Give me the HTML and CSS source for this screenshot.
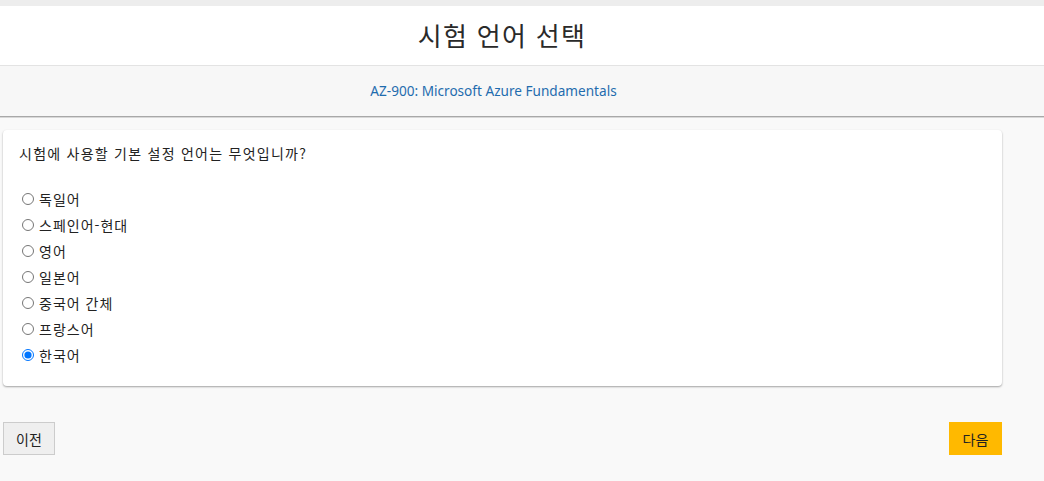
FILE: index.html
```html
<!DOCTYPE html>
<html lang="ko">
<head>
<meta charset="utf-8">
<title>시험 언어 선택</title>
<link rel="stylesheet" href="styles.css">
</head>
<body>
<div class="topstrip"></div>
<header class="title-bar">
  <h1>시험 언어 선택</h1>
</header>
<div class="sub-bar">
  <a class="exam-link" href="#">AZ-900: Microsoft Azure Fundamentals</a>
</div>
<main class="content">
  <section class="card">
    <p class="question">시험에 사용할 기본 설정 언어는 무엇입니까?</p>
    <ul class="options">
      <li><label><input type="radio" name="lang"><span>독일어</span></label></li>
      <li><label><input type="radio" name="lang"><span>스페인어-현대</span></label></li>
      <li><label><input type="radio" name="lang"><span>영어</span></label></li>
      <li><label><input type="radio" name="lang"><span>일본어</span></label></li>
      <li><label><input type="radio" name="lang"><span>중국어 간체</span></label></li>
      <li><label><input type="radio" name="lang"><span>프랑스어</span></label></li>
      <li><label><input type="radio" name="lang" checked><span>한국어</span></label></li>
    </ul>
  </section>
  <div class="actions">
    <button class="btn btn-prev" type="button">이전</button>
    <button class="btn btn-next" type="button">다음</button>
  </div>
</main>
</body>
</html>
```
FILE: styles.css
```css
html, body {
  margin: 0;
  padding: 0;
}
body {
  background: #f9f9f9;
  font-family: "Noto Sans", "Noto Sans CJK KR", sans-serif;
  color: #222;
  width: 1044px;
  height: 481px;
  overflow: hidden;
}
.topstrip {
  height: 6px;
  background: #ededed;
}
.title-bar {
  background: #fff;
  height: 59px;
  border-bottom: 1px solid #e3e3e3;
  display: flex;
  align-items: center;
  justify-content: center;
  padding-right: 40px;
}
.title-bar h1 {
  margin: 0;
  font-family: "Noto Sans CJK KR", sans-serif;
  font-weight: 400;
  font-size: 26px;
  letter-spacing: 1.3px;
  color: #2a2a2a;
  line-height: 1;
  padding-bottom: 1px;
}
.sub-bar {
  background: #f7f7f7;
  height: 50px;
  border-bottom: 1px solid #a8a8a8;
  box-shadow: 0 1px 0 #d8d8d8;
  display: flex;
  align-items: center;
  justify-content: center;
  padding-right: 57px;
}
.exam-link {
  color: #1f6cae;
  text-decoration: none;
  font-size: 13.6px;
  font-family: "Noto Sans", sans-serif;
  padding-bottom: 1px;
}
.content {
  padding: 13px 0 0 3px;
  width: 999px;
}
.card {
  background: #fff;
  border-radius: 4px;
  box-shadow: 0 1px 2px rgba(0,0,0,0.35);
  padding: 13px 16px 18px 16px;
}
.question {
  margin: 0 0 23px 0;
  font-family: "Noto Sans CJK KR", sans-serif;
  font-size: 14px;
  line-height: 20px;
  letter-spacing: 1.25px;
  color: #222;
}
.options {
  list-style: none;
  margin: 0;
  padding: 0;
}
.options li {
  height: 26px;
  display: flex;
  align-items: center;
}
.options label {
  display: flex;
  align-items: center;
  font-family: "Noto Sans CJK KR", sans-serif;
  font-size: 14px;
  letter-spacing: 1px;
  color: #222;
}
.options input {
  margin: 0 5px 0 3px;
  width: 12px;
  height: 12px;
}
.actions {
  display: flex;
  justify-content: space-between;
  margin-top: 36px;
}
.btn {
  font-family: "Noto Sans CJK KR", sans-serif;
  font-size: 14px;
  height: 33px;
  padding: 0 12px;
  color: #222;
  cursor: pointer;
}
.btn-prev {
  background: #efefef;
  border: 1px solid #cccccc;
}
.btn-next {
  background: #ffb900;
  border: 1px solid #ffb900;
  width: 53px;
}
```
